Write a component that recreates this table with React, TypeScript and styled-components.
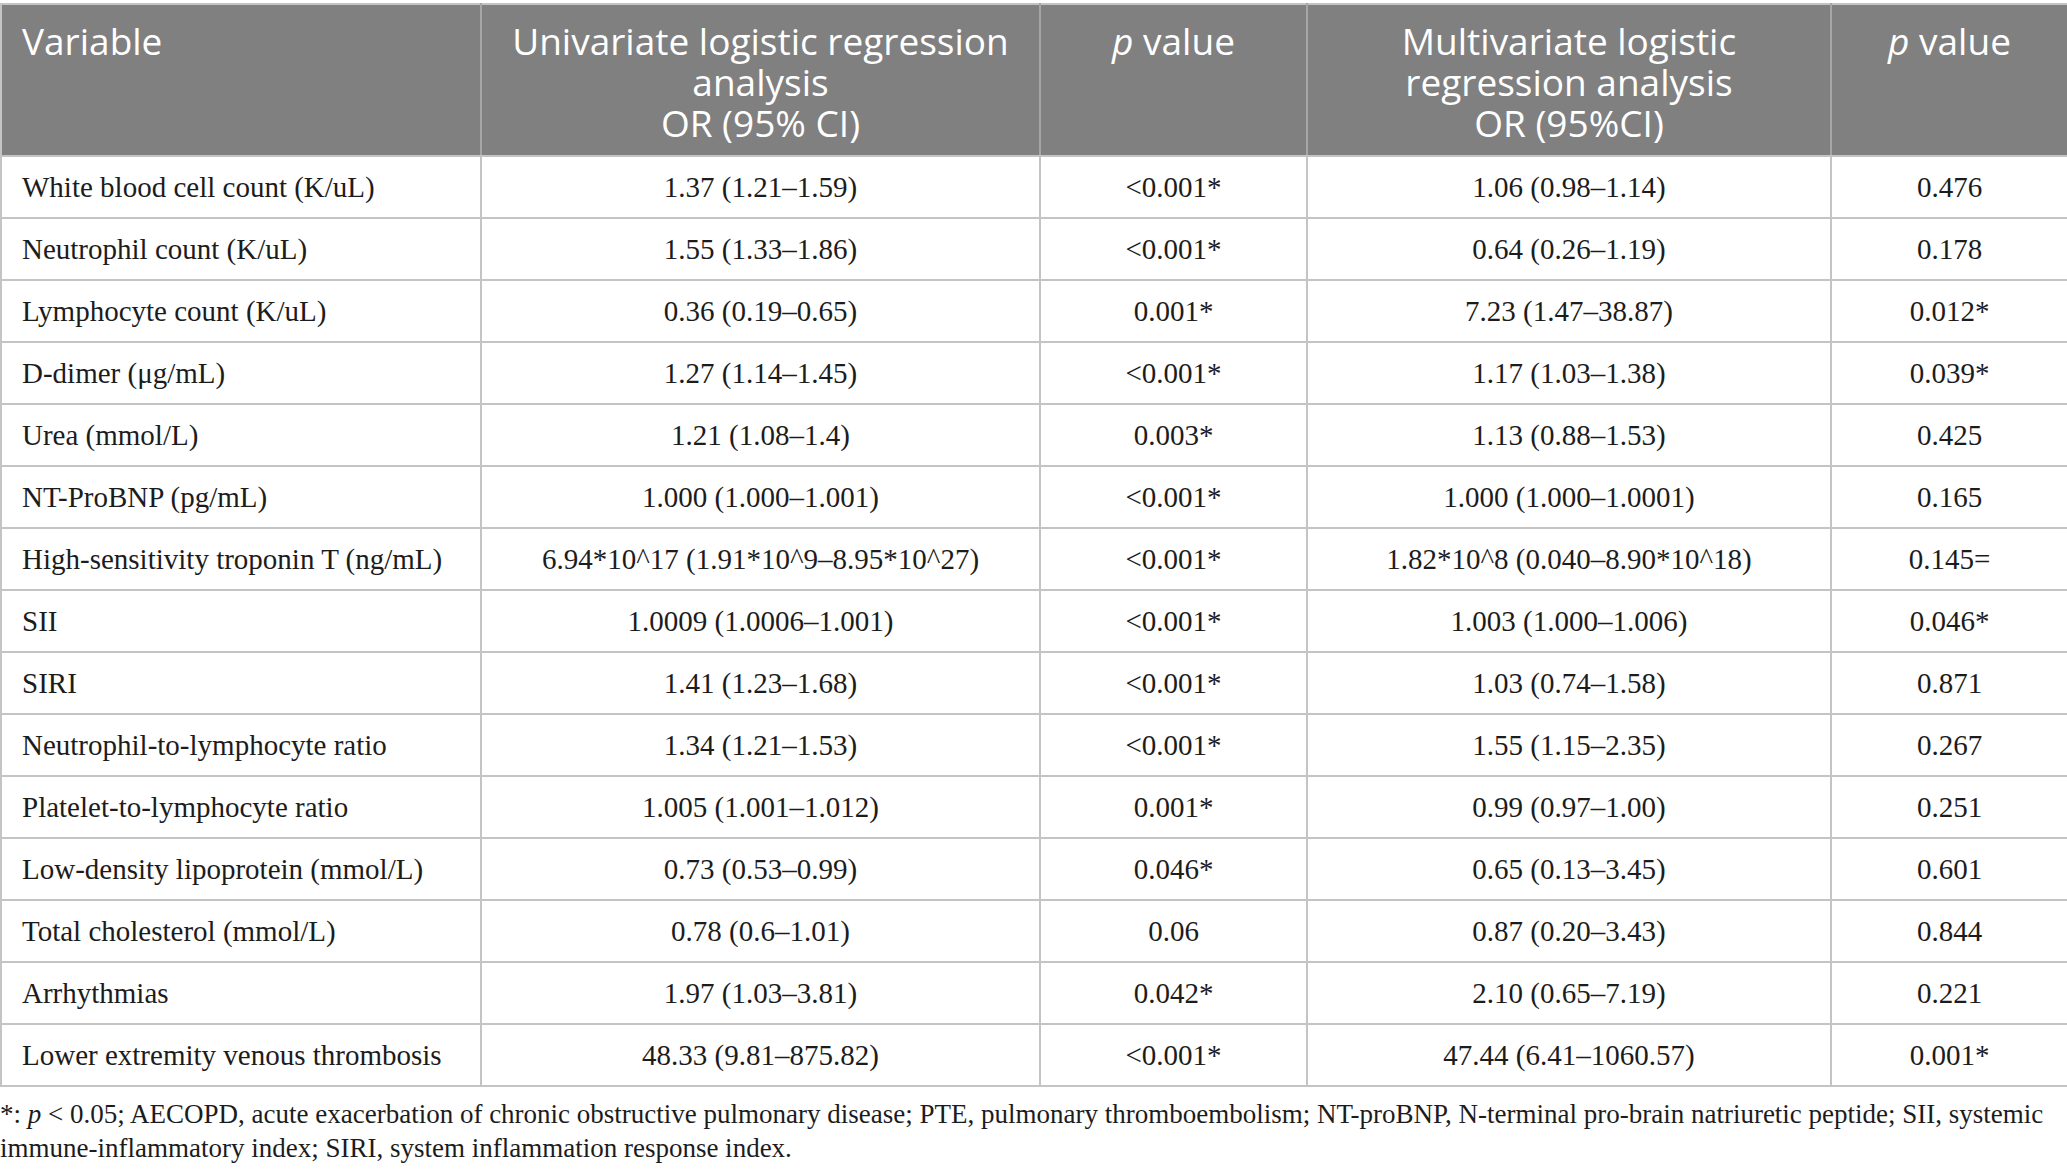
import styled, { createGlobalStyle } from "styled-components";

const GlobalStyle = createGlobalStyle`
  html, body {
    margin: 0;
    padding: 0;
    background: #ffffff;
  }
  body {
    padding-top: 3px;
  }
`;

type Row = {
  name: string;
  uni: string;
  uniP: string;
  multi: string;
  multiP: string;
};

const rows: Row[] = [
  { name: "White blood cell count (K/uL)", uni: "1.37 (1.21–1.59)", uniP: "<0.001*", multi: "1.06 (0.98–1.14)", multiP: "0.476" },
  { name: "Neutrophil count (K/uL)", uni: "1.55 (1.33–1.86)", uniP: "<0.001*", multi: "0.64 (0.26–1.19)", multiP: "0.178" },
  { name: "Lymphocyte count (K/uL)", uni: "0.36 (0.19–0.65)", uniP: "0.001*", multi: "7.23 (1.47–38.87)", multiP: "0.012*" },
  { name: "D-dimer (μg/mL)", uni: "1.27 (1.14–1.45)", uniP: "<0.001*", multi: "1.17 (1.03–1.38)", multiP: "0.039*" },
  { name: "Urea (mmol/L)", uni: "1.21 (1.08–1.4)", uniP: "0.003*", multi: "1.13 (0.88–1.53)", multiP: "0.425" },
  { name: "NT-ProBNP (pg/mL)", uni: "1.000 (1.000–1.001)", uniP: "<0.001*", multi: "1.000 (1.000–1.0001)", multiP: "0.165" },
  { name: "High-sensitivity troponin T (ng/mL)", uni: "6.94*10^17 (1.91*10^9–8.95*10^27)", uniP: "<0.001*", multi: "1.82*10^8 (0.040–8.90*10^18)", multiP: "0.145=" },
  { name: "SII", uni: "1.0009 (1.0006–1.001)", uniP: "<0.001*", multi: "1.003 (1.000–1.006)", multiP: "0.046*" },
  { name: "SIRI", uni: "1.41 (1.23–1.68)", uniP: "<0.001*", multi: "1.03 (0.74–1.58)", multiP: "0.871" },
  { name: "Neutrophil-to-lymphocyte ratio", uni: "1.34 (1.21–1.53)", uniP: "<0.001*", multi: "1.55 (1.15–2.35)", multiP: "0.267" },
  { name: "Platelet-to-lymphocyte ratio", uni: "1.005 (1.001–1.012)", uniP: "0.001*", multi: "0.99 (0.97–1.00)", multiP: "0.251" },
  { name: "Low-density lipoprotein (mmol/L)", uni: "0.73 (0.53–0.99)", uniP: "0.046*", multi: "0.65 (0.13–3.45)", multiP: "0.601" },
  { name: "Total cholesterol (mmol/L)", uni: "0.78 (0.6–1.01)", uniP: "0.06", multi: "0.87 (0.20–3.43)", multiP: "0.844" },
  { name: "Arrhythmias", uni: "1.97 (1.03–3.81)", uniP: "0.042*", multi: "2.10 (0.65–7.19)", multiP: "0.221" },
  { name: "Lower extremity venous thrombosis", uni: "48.33 (9.81–875.82)", uniP: "<0.001*", multi: "47.44 (6.41–1060.57)", multiP: "0.001*" },
];

const App = () => {
  return (
    <>
      <GlobalStyle />
      <Page>
        <Table>
          <colgroup>
            <col style={{ width: 480 }} />
            <col style={{ width: 559 }} />
            <col style={{ width: 267 }} />
            <col style={{ width: 524 }} />
            <col style={{ width: 237 }} />
          </colgroup>
          <thead>
            <tr>
              <HeadCell $align="left">Variable</HeadCell>
              <HeadCell>
                Univariate logistic regression
                <br />
                analysis
                <br />
                OR (95% CI)
              </HeadCell>
              <HeadCell>
                <i>p</i> value
              </HeadCell>
              <HeadCell>
                Multivariate logistic
                <br />
                regression analysis
                <br />
                OR (95%CI)
              </HeadCell>
              <HeadCell>
                <i>p</i> value
              </HeadCell>
            </tr>
          </thead>
          <tbody>
            {rows.map((r) => (
              <tr key={r.name}>
                <Cell $align="left">{r.name}</Cell>
                <Cell>{r.uni}</Cell>
                <Cell>{r.uniP}</Cell>
                <Cell>{r.multi}</Cell>
                <Cell>{r.multiP}</Cell>
              </tr>
            ))}
          </tbody>
        </Table>
        <Footnote>
          *: <i>p</i> &lt; 0.05; AECOPD, acute exacerbation of chronic obstructive pulmonary disease; PTE,
          pulmonary thromboembolism; NT-proBNP, N-terminal pro-brain natriuretic peptide; SII, systemic
          immune-inflammatory index; SIRI, system inflammation response index.
        </Footnote>
      </Page>
    </>
  );
};

const Page = styled.div`
  width: 2067px;
`;

const Table = styled.table`
  width: 2067px;
  table-layout: fixed;
  border-collapse: collapse;
  border: 2px solid #c4c4c4;
`;

const HeadCell = styled.th<{ $align?: "left" | "center" }>`
  background: #808080;
  color: #ffffff;
  font-family: "Open Sans", "Noto Sans", sans-serif;
  font-weight: 400;
  font-size: 37px;
  line-height: 41px;
  text-align: ${(p) => p.$align ?? "center"};
  vertical-align: top;
  padding: 15px 20px 10px 20px;
  height: 152px;
  box-sizing: border-box;
  border: 2px solid #a6a6a6;
  border-top: none;
  border-bottom: 2px solid #c4c4c4;
  white-space: nowrap;

  &:first-child {
    border-left: none;
  }
  &:last-child {
    border-right: none;
  }
`;

const Cell = styled.td<{ $align?: "left" | "center" }>`
  font-family: "Liberation Serif", "Times New Roman", serif;
  font-size: 29px;
  color: #1c1c1c;
  text-align: ${(p) => p.$align ?? "center"};
  vertical-align: middle;
  height: 62px;
  box-sizing: border-box;
  padding: 0 20px;
  border: 2px solid #c4c4c4;
  white-space: nowrap;
`;

const Footnote = styled.p`
  margin: 10px 0 0 0;
  font-family: "Liberation Serif", "Times New Roman", serif;
  font-size: 27px;
  line-height: 34px;
  color: #1c1c1c;
`;

export default App;
